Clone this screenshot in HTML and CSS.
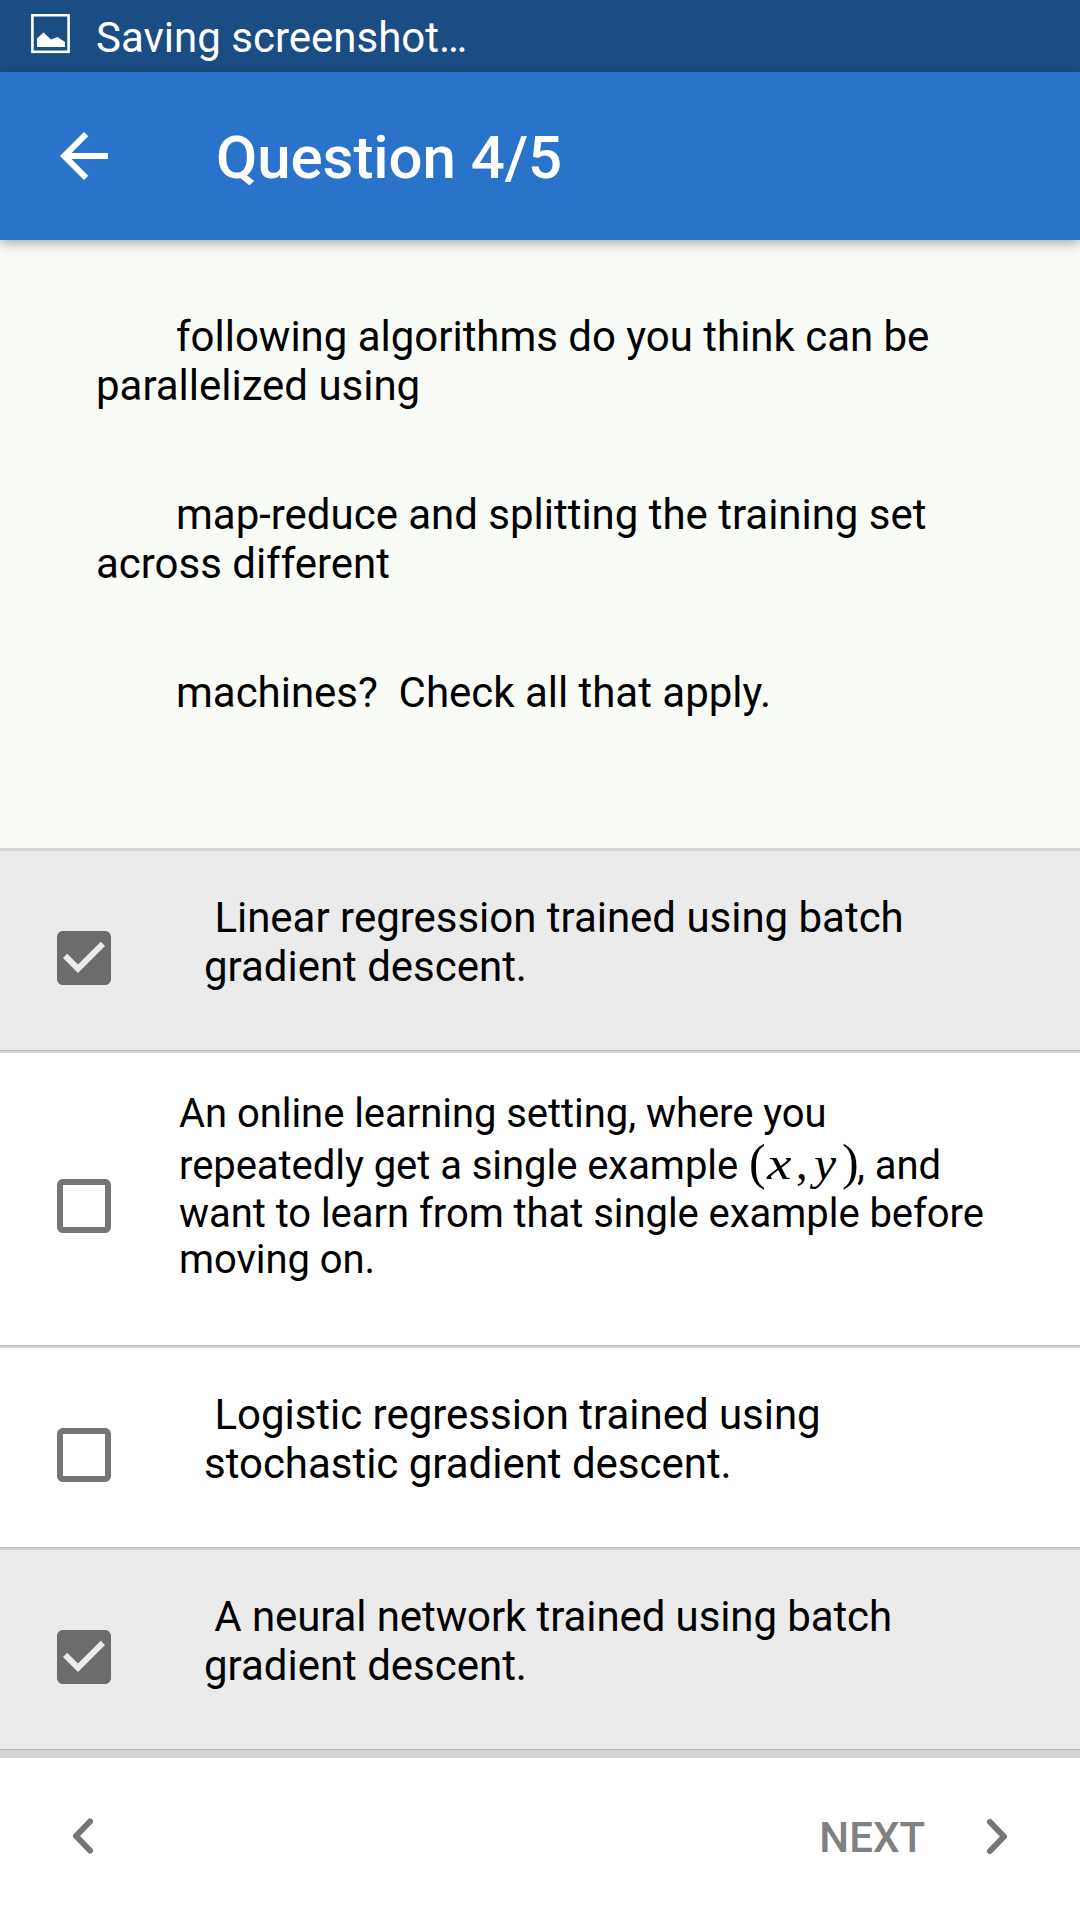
FILE: index.html
```html
<!DOCTYPE html>
<html lang="en">
<head>
<meta charset="utf-8">
<title>Question 4/5</title>
<link rel="stylesheet" href="styles.css">
</head>
<body>
<div class="screen">
  <div class="statusbar">
    <svg class="status-icon" width="39" height="40" viewBox="0 0 39 40"><rect x="1.4" y="1.2" width="36.2" height="36.6" fill="none" stroke="#fff" stroke-width="2.6"/><path d="M6 33V24.500L12.500 18.500L20 25.500L26.500 23L34 28V33Z" fill="#fff"/></svg>
    <span class="status-text">Saving screenshot…</span>
  </div>
  <header class="appbar">
    <svg class="back" width="72" height="72" viewBox="0 0 24 24"><path fill="#fff" d="M20 11H7.830l5.590-5.590L12 4l-8 8 8 8 1.410-1.410L7.830 13H20v-2z"/></svg>
    <h1 class="title">Question 4/5</h1>
  </header>
  <main class="content">
    <section class="question">
      <p class="para"><span class="indent"></span>following algorithms do you think can be<br>parallelized using</p>
      <p class="para"><span class="indent"></span>map-reduce and splitting the training set<br>across different</p>
      <p class="para"><span class="indent"></span>machines?&nbsp; Check all that apply.</p>
    </section>
    <div class="option checked">
      <svg class="box" width="72" height="72" viewBox="0 0 24 24"><path fill="#6c6c6c" d="M19 3H5c-1.110 0-2 .9-2 2v14c0 1.100.89 2 2 2h14c1.110 0 2-.9 2-2V5c0-1.100-.89-2-2-2zm-9 14l-5-5 1.410-1.410L10 14.170l7.590-7.590L19 8l-9 9z"/></svg>
      <p class="label">&nbsp;Linear regression trained using batch<br>gradient descent.</p>
    </div>
    <div class="option tall">
      <svg class="box" width="72" height="72" viewBox="0 0 24 24"><path fill="#757575" d="M19 5v14H5V5h14m0-2H5c-1.100 0-2 .9-2 2v14c0 1.100.9 2 2 2h14c1.100 0 2-.9 2-2V5c0-1.100-.9-2-2-2z"/></svg>
      <div class="formula-label">
        <div class="row">An online learning setting, where you</div>
        <div class="row math-row">repeatedly get a single example <span class="math"><span class="paren">(</span><i class="var x">x</i><span class="comma">,</span><i class="var y">y</i><span class="paren close">)</span></span>, and</div>
        <div class="row short">want to learn from that single example before</div>
        <div class="row">moving on.</div>
      </div>
    </div>
    <div class="option">
      <svg class="box" width="72" height="72" viewBox="0 0 24 24"><path fill="#757575" d="M19 5v14H5V5h14m0-2H5c-1.100 0-2 .9-2 2v14c0 1.100.9 2 2 2h14c1.100 0 2-.9 2-2V5c0-1.100-.9-2-2-2z"/></svg>
      <p class="label">&nbsp;Logistic regression trained using<br>stochastic gradient descent.</p>
    </div>
    <div class="option checked">
      <svg class="box" width="72" height="72" viewBox="0 0 24 24"><path fill="#6c6c6c" d="M19 3H5c-1.110 0-2 .9-2 2v14c0 1.100.89 2 2 2h14c1.110 0 2-.9 2-2V5c0-1.100-.89-2-2-2zm-9 14l-5-5 1.410-1.410L10 14.170l7.590-7.590L19 8l-9 9z"/></svg>
      <p class="label"><span class="tight">&nbsp;A neural network trained using batch</span><br>gradient descent.</p>
    </div>
  </main>
  <footer class="footer">
    <svg class="prev" width="24" height="40" viewBox="0 0 24 40"><path d="M19 5.500L5 20L19 34.500" fill="none" stroke="#757575" stroke-width="6" stroke-linecap="round" stroke-linejoin="round"/></svg>
    <div class="next">
      <span class="next-text">NEXT</span>
      <svg width="24" height="40" viewBox="0 0 24 40"><path d="M5 6L19 20.500L5 35" fill="none" stroke="#757575" stroke-width="6" stroke-linecap="round" stroke-linejoin="round"/></svg>
    </div>
  </footer>
</div>
</body>
</html>
```
FILE: styles.css
```css
* { box-sizing: border-box; }
body {
  margin: 0;
  font-family: Roboto, sans-serif;
  color: #000;
}
h1, p { margin: 0; font-weight: 400; }
svg { display: block; flex: none; }
.screen {
  width: 1080px;
  height: 1920px;
  display: flex;
  flex-direction: column;
  overflow: hidden;
  background: #fff;
  white-space: nowrap;
}
.statusbar {
  height: 72px;
  flex: none;
  display: flex;
  align-items: flex-start;
  padding: 14px 0 0 31px;
  gap: 26px;
  background: #1b4d85;
  color: #fff;
}
.status-text { font-size: 42px; line-height: 48px; }
.appbar {
  height: 168px;
  flex: none;
  display: flex;
  align-items: center;
  padding-left: 48px;
  gap: 96px;
  background: #2a73cb;
  color: #fff;
  position: relative;
  box-shadow: 0 3px 12px rgba(0, 0, 0, .35);
}
.title { font-size: 60px; font-weight: 500; line-height: 72px; padding-top: 4px; letter-spacing: -.08px; }
.content { flex: none; }
.question {
  height: 611px;
  padding: 72px 0 0 96px;
  background: #f9fbf6;
  border-bottom: 3px solid #d4d5d3;
}
.para { font-size: 42px; line-height: 49px; margin-bottom: 80px; letter-spacing: -.02px; }
.indent { display: inline-block; width: 80px; }
.option {
  height: 202px;
  display: flex;
  align-items: flex-start;
  padding: 71px 0 0 48px;
  gap: 84px;
  border-bottom: 2px solid #d3d3d3;
  box-shadow: inset 0 -1px #b8b8b8;
}
.checked { background: #ebebeb; }
.tall { height: 295px; padding-top: 117px; gap: 59px; }
.label { font-size: 42px; line-height: 49px; margin-top: -29px; letter-spacing: -.02px; }
.tight { letter-spacing: -.1px; }
.formula-label { margin-top: -80px; font-size: 40px; letter-spacing: -.05px; }
.row { height: 47px; line-height: 47px; }
.short { height: 46px; }
.math-row { height: 53px; line-height: 58px; }
.math {
  display: inline-flex;
  align-items: baseline;
  line-height: 40px;
  margin-left: 1px;
  font-family: "Liberation Serif", serif;
}
.paren { width: 18px; font-size: 50px; }
.close { width: 15px; }
.var { font-size: 46px; }
.x { width: 29px; transform: scaleX(1.2); transform-origin: left; }
.y { width: 28px; transform: scaleX(1.08); transform-origin: left; }
.comma { width: 18px; font-size: 46px; }
.footer {
  flex: 1;
  display: flex;
  align-items: center;
  justify-content: space-between;
  padding: 0 71px 6px;
  border-top: 6px solid #d6d7d5;
}
.next { display: flex; align-items: center; gap: 60px; }
.next-text { font-size: 42px; font-weight: 500; line-height: 50px; padding-top: 3px; color: #808080; }
```
